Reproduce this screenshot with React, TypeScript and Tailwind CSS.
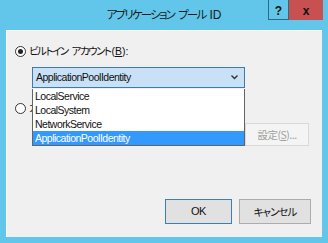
import React from "react";

const jp = "[font-family:'Noto_Sans_CJK_JP',sans-serif] [font-feature-settings:'palt']";
const ui = "[font-family:'Liberation_Sans','Noto_Sans_CJK_JP',sans-serif] tracking-[-0.5px]";

function Radio({ checked }: { checked?: boolean }) {
  return (
    <span className="flex h-[11px] w-[11px] shrink-0 items-center justify-center rounded-full border border-[#333] bg-white">
      {checked && <span className="h-[5px] w-[5px] rounded-full bg-[#222]" />}
    </span>
  );
}

function Label({ kana, keyChar }: { kana: string[]; keyChar: string }) {
  return (
    <span className={`${jp} flex items-center gap-[4px] text-[10.5px] leading-none text-[#111]`}>
      {kana.map((k, i) => (
        <span key={i} className="tracking-[-1.5px]">
          {k}
        </span>
      ))}
      <span className="-ml-[3px] [font-family:'Liberation_Sans',sans-serif]">
        (<span className="underline">{keyChar}</span>):
      </span>
    </span>
  );
}

export default function App() {
  const items = ["LocalService", "LocalSystem", "NetworkService", "ApplicationPoolIdentity"];
  return (
    <div className="flex h-[243px] w-[328px] flex-col bg-[#61c6ea]">
      {/* title bar */}
      <div className="relative flex h-[30px] shrink-0 items-center justify-center">
        <span className={`${jp} flex items-center gap-[4px] text-[11.5px] text-[#1a1a1a]`}>
          <span className="tracking-[-1.8px]">アプリケーション</span>
          <span className="tracking-[-1.8px]">プール</span>
          <span className="[font-family:'Liberation_Sans',sans-serif] text-[12px]">ID</span>
        </span>
        <div className="absolute right-[5px] top-0 flex">
          <div className="flex h-[20px] w-[21px] items-center justify-center border border-t-0 border-[#2d6a85] pt-[2px] text-[12px] font-bold text-[#111] [font-family:'Liberation_Sans',sans-serif]">?</div>
          <div className="flex h-[20px] w-[34px] items-center justify-center bg-[#c75050] pt-[1px] text-[12px] font-bold text-[#111] [font-family:'Liberation_Sans',sans-serif]">x</div>
        </div>
      </div>

      {/* client area */}
      <div className="relative mx-[6px] mb-[6px] flex flex-1 flex-col border-l border-t border-white bg-[#f0f0f0] pl-[8px] pt-[15px]">
        <div className="flex items-center gap-[3px]">
          <Radio checked />
          <Label kana={["ビルトイン", "アカウント"]} keyChar="B" />
        </div>

        <div className="ml-[17px] mt-[10px] flex h-[21px] w-[213px] items-center justify-between border border-[#3d7bad] bg-[#c8e1f6] pl-[3px] pr-[6px]">
          <span className={`${ui} text-[10.5px] text-[#111]`}>ApplicationPoolIdentity</span>
          <svg width="7" height="5" viewBox="0 0 7 5">
            <polyline points="0.5,0.5 3.5,3.5 6.5,0.5" fill="none" stroke="#333" strokeWidth="1.4" />
          </svg>
        </div>

        <div className="mt-[15px] flex items-center gap-[3px]">
          <Radio />
          <Label kana={["カスタム", "アカウント"]} keyChar="C" />
        </div>

        <div className="ml-[17px] mt-[9px] flex items-center gap-[5px]">
          <div className="h-[23px] w-[208px] border border-[#d9d9d9] bg-[#f0f0f0]" />
          <div className={`${jp} flex h-[23px] w-[64px] items-center justify-center border border-[#d9d9d9] bg-[#f4f4f4] text-[10.5px] tracking-[-0.5px] text-[#a0a0a0]`}>
            設定(<span className="underline">S</span>)...
          </div>
        </div>

        <div className="mt-auto flex justify-end gap-[7px] pb-[13px] pr-[11px]">
          <div className={`${ui} flex h-[25px] w-[67px] items-center justify-center border border-[#3c7fb1] bg-[#e1e1e1] text-[11px] text-[#111]`}>OK</div>
          <div className={`${jp} flex h-[25px] w-[72px] items-center justify-center border border-[#acacac] bg-[#e1e1e1] text-[10.5px] tracking-[-1px] text-[#111]`}>キャンセル</div>
        </div>

        {/* open dropdown list */}
        <div className="absolute left-[25px] top-[58px] w-[213px] border border-t-0 border-[#646464] bg-white">
          {items.map((t, i) => (
            <div
              key={t}
              className={`${ui} h-[14px] pl-[2px] text-[10.5px] leading-[14px] ${i === 3 ? "bg-[#3399ff] text-white" : "text-[#111]"}`}
            >
              {t}
            </div>
          ))}
        </div>
      </div>
    </div>
  );
}
